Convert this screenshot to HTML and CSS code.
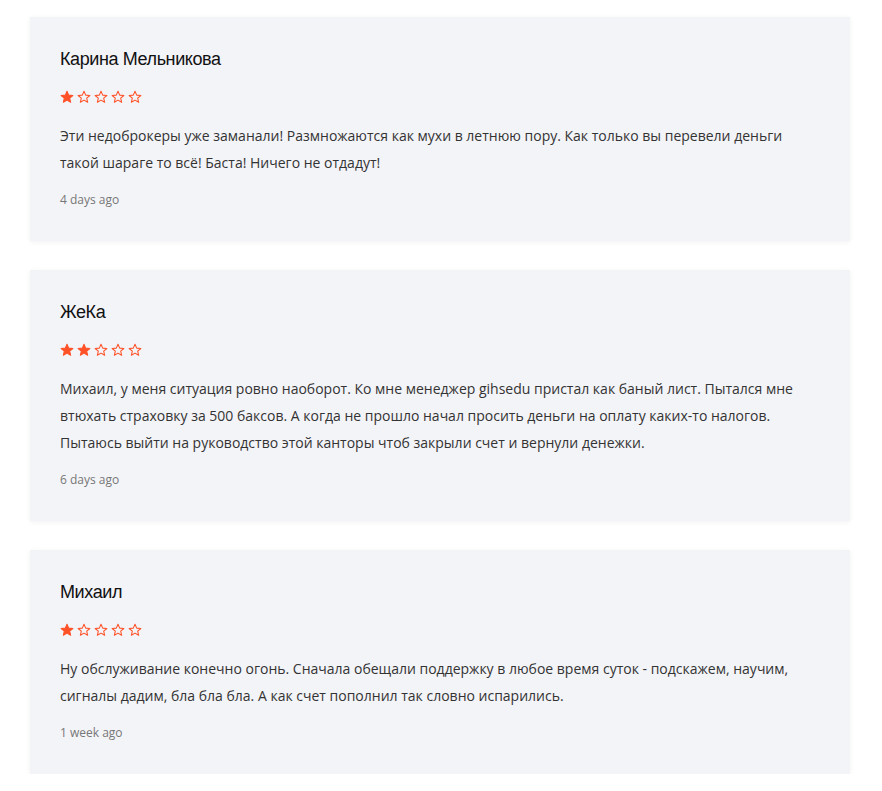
FILE: index.html
```html
<!DOCTYPE html>
<html lang="ru">
<head>
<meta charset="utf-8">
<title>Отзывы</title>
<link rel="stylesheet" href="styles.css">
</head>
<body>
<svg width="0" height="0" class="defs">
  <defs>
    <path id="star" d="M12 2.2l2.9 6.6 7.2.6-5.5 4.7 1.7 7-6.3-3.8-6.3 3.8 1.7-7L1.9 9.4l7.2-.6z"/>
  </defs>
</svg>
<div class="reviews">
  <div class="card">
    <div class="name">Карина Мельникова</div>
    <div class="stars">
      <svg class="star full" viewBox="0 0 24 24"><use href="#star"/></svg>
      <svg class="star" viewBox="0 0 24 24"><use href="#star"/></svg>
      <svg class="star" viewBox="0 0 24 24"><use href="#star"/></svg>
      <svg class="star" viewBox="0 0 24 24"><use href="#star"/></svg>
      <svg class="star" viewBox="0 0 24 24"><use href="#star"/></svg>
    </div>
    <p class="text">Эти недоброкеры уже заманали! Размножаются как мухи в летнюю пору. Как только вы перевели деньги такой шараге то всё! Баста! Ничего не отдадут!</p>
    <div class="date">4 days ago</div>
  </div>
  <div class="card">
    <div class="name">ЖеКа</div>
    <div class="stars">
      <svg class="star full" viewBox="0 0 24 24"><use href="#star"/></svg>
      <svg class="star full" viewBox="0 0 24 24"><use href="#star"/></svg>
      <svg class="star" viewBox="0 0 24 24"><use href="#star"/></svg>
      <svg class="star" viewBox="0 0 24 24"><use href="#star"/></svg>
      <svg class="star" viewBox="0 0 24 24"><use href="#star"/></svg>
    </div>
    <p class="text">Михаил, у меня ситуация ровно наоборот. Ко мне менеджер gihsedu пристал как баный лист. Пытался мне втюхать страховку за 500 баксов. А когда не прошло начал просить деньги на оплату каких-то налогов. Пытаюсь выйти на руководство этой канторы чтоб закрыли счет и вернули денежки.</p>
    <div class="date">6 days ago</div>
  </div>
  <div class="card">
    <div class="name">Михаил</div>
    <div class="stars">
      <svg class="star full" viewBox="0 0 24 24"><use href="#star"/></svg>
      <svg class="star" viewBox="0 0 24 24"><use href="#star"/></svg>
      <svg class="star" viewBox="0 0 24 24"><use href="#star"/></svg>
      <svg class="star" viewBox="0 0 24 24"><use href="#star"/></svg>
      <svg class="star" viewBox="0 0 24 24"><use href="#star"/></svg>
    </div>
    <p class="text">Ну обслуживание конечно огонь. Сначала обещали поддержку в любое время суток - подскажем, научим, сигналы дадим, бла бла бла. А как счет пополнил так словно испарились.</p>
    <div class="date">1 week ago</div>
  </div>
</div>
</body>
</html>
```
FILE: styles.css
```css
html, body {
  margin: 0;
  padding: 0;
  background: #ffffff;
}
.defs {
  position: absolute;
  width: 0;
  height: 0;
}
.reviews {
  width: 820px;
  margin: 17px 0 0 30px;
  display: flex;
  flex-direction: column;
  gap: 29px;
}
.card {
  background: #f3f4f8;
  box-shadow: 0 1px 5px rgba(0, 0, 0, 0.06);
  padding: 30px 30px 32px 30px;
}
.name {
  font-family: "Liberation Sans", Arial, sans-serif;
  font-size: 18px;
  letter-spacing: -0.4px;
  line-height: 24px;
  color: #111111;
}
.stars {
  display: flex;
  gap: 3px;
  margin-top: 19px;
  height: 14px;
}
.star {
  width: 14px;
  height: 14px;
  fill: none;
  stroke: #ff5127;
  stroke-width: 1.8;
  stroke-linejoin: round;
}
.star.full {
  fill: #ff5127;
}
.text {
  margin: 18px 0 0 0;
  font-family: "Open Sans", sans-serif;
  font-size: 14px;
  line-height: 27px;
  color: #333333;
}
.date {
  margin-top: 15px;
  font-family: "Open Sans", sans-serif;
  font-size: 12px;
  line-height: 18px;
  color: #777777;
}
```
